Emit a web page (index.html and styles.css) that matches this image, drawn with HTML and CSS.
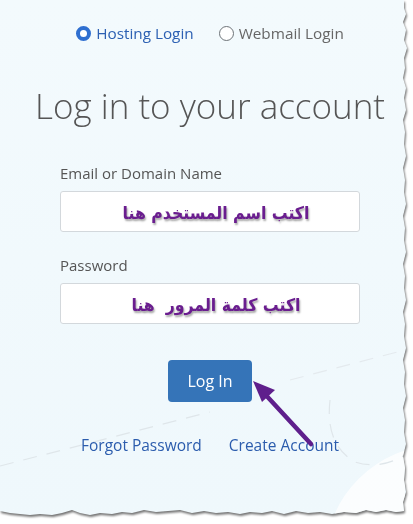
FILE: index.html
```html
<!DOCTYPE html>
<html lang="en">
<head>
<meta charset="utf-8">
<title>Log in to your account</title>
<link rel="stylesheet" href="styles.css">
</head>
<body>
<div class="page">
  <div class="panel">
    <svg class="decor" width="405" height="520" viewBox="0 0 405 520" aria-hidden="true">
      <circle cx="440" cy="560" r="115" fill="#ffffff" opacity="0.75"/>
      <path d="M0 466 L210 412" stroke="#dfe6ea" stroke-width="1.2" fill="none" stroke-dasharray="14 10"/>
      <path d="M330 400 Q325 445 355 462 Q380 470 405 455" stroke="#dfe6ea" stroke-width="1.2" fill="none" stroke-dasharray="14 10"/>
      <path d="M290 380 L405 350" stroke="#e4eaee" stroke-width="1.2" fill="none" stroke-dasharray="14 10"/>
    </svg>
    <div class="content">
      <div class="radios">
        <label class="radio checked"><span class="dot on"></span>Hosting Login</label>
        <label class="radio"><span class="dot"></span>Webmail Login</label>
      </div>
      <h1 class="title">Log in to your account</h1>
      <form class="form">
        <div class="label">Email or Domain Name</div>
        <div class="input"><span class="ar" dir="rtl">اكتب اسم المستخدم هنا</span></div>
        <div class="label second">Password</div>
        <div class="input"><span class="ar" dir="rtl">اكتب كلمة المرور  هنا</span></div>
        <div class="btnrow"><span class="btn">Log In</span></div>
      </form>
      <div class="links">
        <a class="link">Forgot Password</a>
        <a class="link">Create Account</a>
      </div>
    </div>
    <svg class="arrow" width="100" height="90" viewBox="0 0 100 90" aria-hidden="true">
      <line x1="18" y1="22" x2="66" y2="74" stroke="#5f1f8c" stroke-width="4.5" stroke-linecap="round"/>
      <polygon points="8,11 30,20 17,32" fill="#5f1f8c"/>
    </svg>
  </div>
</div>
</body>
</html>
```
FILE: styles.css
```css
html, body {
  margin: 0;
  padding: 0;
  background: #ffffff;
}
.page {
  width: 413px;
  height: 524px;
  filter: drop-shadow(1px 2px 1px rgba(0,0,0,0.55));
}
.panel {
  position: relative;
  width: 410px;
  height: 520px;
  background: linear-gradient(180deg, #f3fafd 0%, #eff8fc 100%);
  clip-path: polygon(0 0, 404px 0, 404px 8px, 406px 14px, 403px 22px, 406px 30px, 404px 40px, 407px 48px, 404px 58px, 405px 68px, 403px 78px, 406px 88px, 404px 98px, 406px 110px, 403px 120px, 405px 132px, 404px 144px, 406px 156px, 403px 168px, 405px 180px, 404px 192px, 406px 204px, 403px 216px, 405px 228px, 404px 240px, 406px 252px, 403px 264px, 405px 276px, 404px 288px, 406px 300px, 403px 312px, 405px 324px, 404px 336px, 406px 348px, 403px 360px, 405px 372px, 404px 384px, 406px 396px, 403px 408px, 405px 420px, 404px 432px, 406px 444px, 403px 456px, 405px 468px, 404px 480px, 406px 492px, 403px 502px, 404px 511px, 396px 512px, 386px 510px, 376px 512px, 366px 510px, 356px 513px, 344px 512px, 332px 514px, 320px 512px, 308px 513px, 296px 511px, 284px 514px, 272px 511px, 262px 513px, 250px 512px, 240px 514px, 228px 512px, 216px 513px, 204px 511px, 192px 513px, 180px 510px, 168px 511px, 156px 512px, 144px 510px, 132px 513px, 122px 512px, 112px 514px, 100px 513px, 90px 515px, 80px 513px, 72px 510px, 62px 513px, 52px 515px, 40px 514px, 30px 515px, 20px 514px, 10px 513px, 0 511px);
  overflow: hidden;
}
.decor {
  position: absolute;
  left: 0;
  top: 0;
}
.content {
  position: relative;
  box-sizing: border-box;
  width: 405px;
  padding-left: 15px;
  display: flex;
  flex-direction: column;
  align-items: center;
  font-family: "Open Sans", "Noto Sans", sans-serif;
}
.radios {
  margin-top: 23px;
  display: flex;
  gap: 25px;
  height: 20px;
  align-items: center;
}
.radio {
  display: flex;
  align-items: center;
  font-size: 15.3px;
  line-height: 20px;
  color: #666666;
}
.radio.checked {
  color: #2c60b3;
}
.dot {
  box-sizing: border-box;
  width: 15px;
  height: 15px;
  border-radius: 50%;
  border: 1.2px solid #6d7378;
  background: #ffffff;
  margin-right: 5px;
}
.dot.on {
  border: 4px solid #2f6fd0;
}
.title {
  margin: 40px 0 0 0;
  font-size: 35px;
  line-height: 46px;
  font-weight: 300;
  color: #555555;
  white-space: nowrap;
}
.form {
  width: 300px;
  margin: 34px 0 0 0;
  display: flex;
  flex-direction: column;
}
.label {
  font-size: 15px;
  line-height: 20px;
  color: #555555;
}
.label.second {
  margin-top: 23px;
}
.input {
  margin-top: 8px;
  box-sizing: border-box;
  height: 41px;
  background: #ffffff;
  border: 1px solid #d3d8dc;
  border-radius: 3px;
  display: flex;
  align-items: center;
  justify-content: center;
}
.ar {
  font-family: "DejaVu Sans Condensed", "DejaVu Sans", sans-serif;
  font-stretch: condensed;
  font-weight: bold;
  font-size: 17.5px;
  color: #6a1d8f;
  text-shadow: 1px 2px 2px rgba(0,0,0,0.35);
  white-space: pre;
  margin-left: 12px;
  margin-top: 2px;
}
.btnrow {
  margin-top: 36px;
  display: flex;
  justify-content: center;
}
.btn {
  box-sizing: border-box;
  width: 84px;
  height: 42px;
  background: #3574b8;
  border-radius: 4px;
  color: #ffffff;
  font-size: 16px;
  display: flex;
  align-items: center;
  justify-content: center;
}
.links {
  margin-top: 32px;
  display: flex;
  gap: 27px;
  font-size: 15.5px;
  line-height: 22px;
}
.link {
  color: #2b5cad;
  text-decoration: none;
}
.arrow {
  position: absolute;
  left: 245px;
  top: 370px;
}
```
